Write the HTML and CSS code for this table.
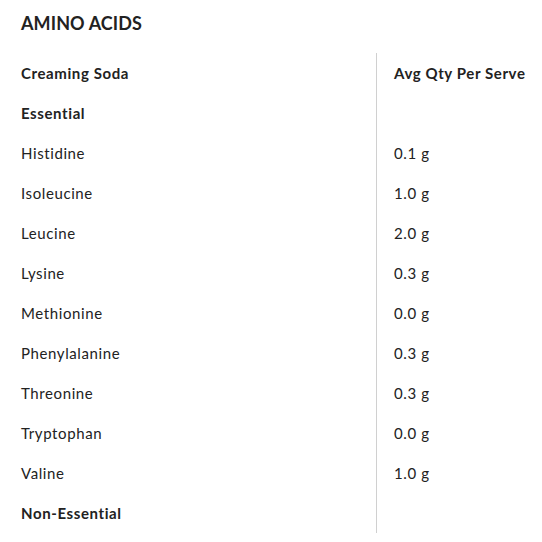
FILE: index.html
```html
<!DOCTYPE html>
<html>
<head>
<meta charset="utf-8">
<link rel="stylesheet" href="styles.css">
</head>
<body>
<div class="panel">
  <h2 class="title">AMINO ACIDS</h2>
  <table class="facts">
    <tr class="head"><td class="name">Creaming Soda</td><td class="qty">Avg Qty Per Serve</td></tr>
    <tr class="group"><td class="name">Essential</td><td class="qty"></td></tr>
    <tr><td class="name">Histidine</td><td class="qty">0.1 g</td></tr>
    <tr><td class="name">Isoleucine</td><td class="qty">1.0 g</td></tr>
    <tr><td class="name">Leucine</td><td class="qty">2.0 g</td></tr>
    <tr><td class="name">Lysine</td><td class="qty">0.3 g</td></tr>
    <tr><td class="name">Methionine</td><td class="qty">0.0 g</td></tr>
    <tr><td class="name">Phenylalanine</td><td class="qty">0.3 g</td></tr>
    <tr><td class="name">Threonine</td><td class="qty">0.3 g</td></tr>
    <tr><td class="name">Tryptophan</td><td class="qty">0.0 g</td></tr>
    <tr><td class="name">Valine</td><td class="qty">1.0 g</td></tr>
    <tr class="group"><td class="name">Non-Essential</td><td class="qty"></td></tr>
  </table>
</div>
</body>
</html>
```

FILE: styles.css
```css
html, body {
  margin: 0;
  padding: 0;
  background: #fff;
}
body {
  font-family: "Lato", "Liberation Sans", sans-serif;
  color: #222;
}
.panel {
  padding: 0 0 0 21px;
}
.title {
  margin: 0;
  height: 53px;
  line-height: 46px;
  font-size: 18px;
  font-weight: 700;
  letter-spacing: 0.1px;
}
.facts {
  border-collapse: collapse;
  width: 521px;
  font-size: 15px;
  letter-spacing: 0.6px;
  white-space: nowrap;
}
.facts td {
  height: 40px;
  padding: 0;
  vertical-align: middle;
}
.facts .name {
  width: 355px;
}
.facts .qty {
  border-left: 1px solid #d0d0d0;
  padding-left: 17px;
}
.head td, .group td {
  font-weight: 700;
}
```
